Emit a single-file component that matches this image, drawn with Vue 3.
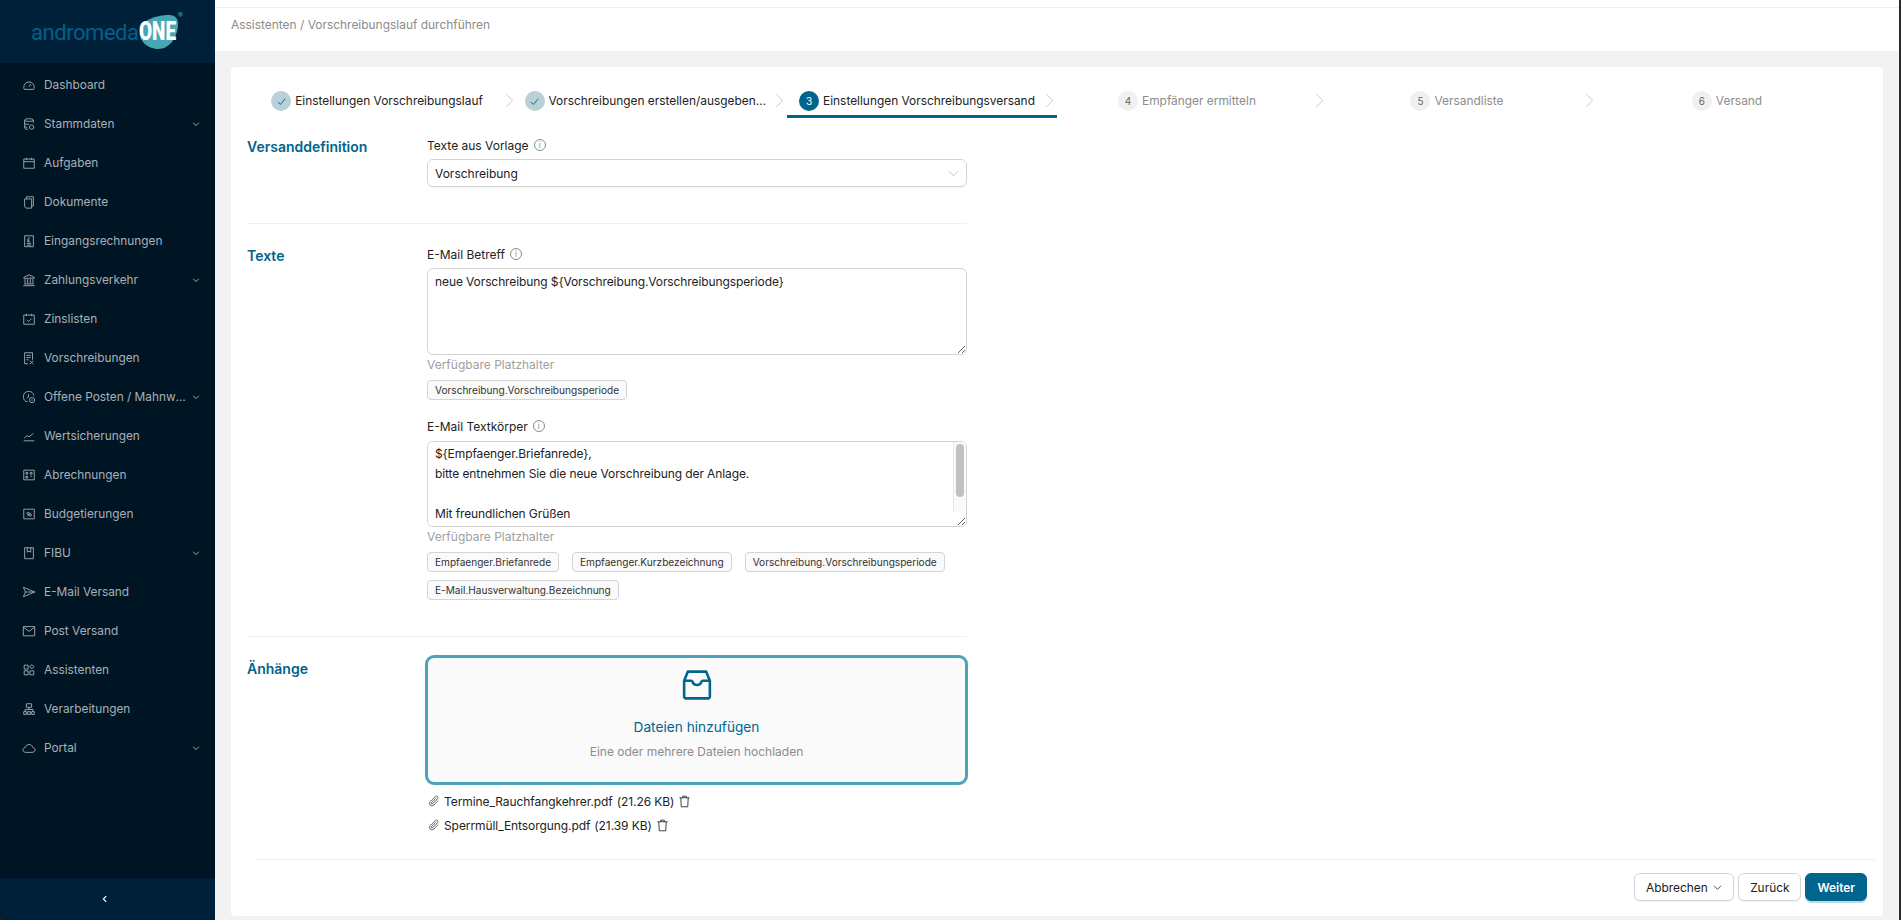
<script setup>
import { ref } from 'vue'

const menu = [
  { label: 'Dashboard', icon: 'gauge' },
  { label: 'Stammdaten', icon: 'db', sub: true },
  { label: 'Aufgaben', icon: 'calendar' },
  { label: 'Dokumente', icon: 'copy' },
  { label: 'Eingangsrechnungen', icon: 'invoice' },
  { label: 'Zahlungsverkehr', icon: 'bank', sub: true },
  { label: 'Zinslisten', icon: 'calcheck' },
  { label: 'Vorschreibungen', icon: 'receipt' },
  { label: 'Offene Posten / Mahnwesen', icon: 'clockgear', sub: true },
  { label: 'Wertsicherungen', icon: 'chart' },
  { label: 'Abrechnungen', icon: 'scan' },
  { label: 'Budgetierungen', icon: 'budget' },
  { label: 'FIBU', icon: 'book', sub: true },
  { label: 'E-Mail Versand', icon: 'send' },
  { label: 'Post Versand', icon: 'mail' },
  { label: 'Assistenten', icon: 'apps' },
  { label: 'Verarbeitungen', icon: 'tree' },
  { label: 'Portal', icon: 'cloud', sub: true }
]

const icons = {
  gauge: 'M2 10.500a6 6 0 1 1 12 0c0 1-.3 1.800-.7 2.500H2.700C2.300 12.300 2 11.500 2 10.500zM8 10l2-3M4.500 9h.5M11 9h.5M8 6v.5',
  db: 'M3 3.500C3 2.500 5 2 8 2s5 .5 5 1.500v3M3 3.500c0 1 2 1.500 5 1.500s5-.5 5-1.500M3 3.500v9C3 13.500 4.500 14 7 14M3 7c0 1 2 1.500 5 1.500M3 10.500c0 .8 1.200 1.300 3 1.400M11 9a2.500 2.500 0 1 0 0 5 2.500 2.500 0 0 0 0-5z',
  calendar: 'M2 3.500h12v10.500H2zM2 6.500h12M5 2v2.500M11 2v2.500',
  copy: 'M5 2h8v10.500h-2M3 4.500h8V15H4.500L3 13.500zM5 2v2.500',
  invoice: 'M3 2h10v12.500H3zM5.500 11h5M5.500 12.800h5M9.500 4.500c-1.500-.5-2.500.3-2.500 1.500v3M6 7h2.500M6 9h3.500',
  bank: 'M8 2l6 3v1H2V5zM3.500 7v5M6.500 7v5M9.500 7v5M12.500 7v5M2.500 12.500h11M1.500 14.500h13',
  calcheck: 'M2 3.500h12v10.500H2zM5 2v2.500M11 2v2.500M5.500 9l2 2 3.500-3.500',
  receipt: 'M3 2h9v8M3 2v12.500h4M5 5h5M5 7.500h5M5 10h2.500M9 11l4 4M13 11l-4 4',
  clockgear: 'M13.500 6.500A6 6 0 1 0 6.500 13.500M7.500 4.500V8l-2 1.500M11.500 8.500a3 3 0 1 0 0 6 3 3 0 0 0 0-6zM11.500 10.500v2',
  chart: 'M2 13.500h12M2.500 10.500l3.500-3 2 1.500 5-4',
  scan: 'M2 2.500h12v11H2zM4.500 5h2v2h-2zM9.500 5h2v2h-2zM4.500 9.500h2v2h-2zM9.500 9.500h2',
  budget: 'M2 2.500h12v11H2zM6 10.500l4-4M7 6a1.300 1.300 0 1 0 0 2.600A1.300 1.300 0 0 0 7 6zM9.500 8a1.300 1.300 0 1 0 0 2.600 1.300 1.300 0 0 0 0-2.600z',
  book: 'M3 2h10v12.500H3zM6 2v5l2-1 2 1V2',
  send: 'M1.500 2.500l13 5.500-13 5.500L4 8zM4 8h10.500',
  mail: 'M1.500 3h13v10.500h-13zM1.500 3.500L8 8.500l6.500-5',
  apps: 'M2.500 2.500h4.500v4.500H2.500zM2.500 9h4.500v4.500H2.500zM9 9h4.500v4.500H9zM11.200 1.800l2.500 2.500-2.500 2.500-2.500-2.500z',
  tree: 'M5 2h6v4H5zM8 6v2.500M3.500 11V8.500h9V11M2 11h3v3.200H2zM6.500 11h3v3.200h-3zM11 11h3v3.200h-3z',
  cloud: 'M4.500 13C2.500 13 1 11.800 1 10.200 1 8.800 2.200 7.700 3.700 7.500 4.300 5.300 6 4 8 4c2.200 0 3.900 1.400 4.400 3.500 1.500.2 2.600 1.300 2.600 2.700 0 1.600-1.500 2.800-3.500 2.800z'
}

const steps = [
  { label: 'Einstellungen Vorschreibungslauf', state: 'done' },
  { label: 'Vorschreibungen erstellen/ausgeben/versenden', state: 'done' },
  { label: 'Einstellungen Vorschreibungsversand', state: 'active', num: 3 },
  { label: 'Empfänger ermitteln', state: 'todo', num: 4 },
  { label: 'Versandliste', state: 'todo', num: 5 },
  { label: 'Versand', state: 'todo', num: 6 }
]

const subject = ref('neue Vorschreibung ${Vorschreibung.Vorschreibungsperiode}')
const body = ref('${Empfaenger.Briefanrede},\nbitte entnehmen Sie die neue Vorschreibung der Anlage.\n\nMit freundlichen Grüßen\n${E-Mail.Hausverwaltung.Bezeichnung}\n\n\n')

const subjectTags = ['Vorschreibung.Vorschreibungsperiode']
const bodyTags = [
  'Empfaenger.Briefanrede',
  'Empfaenger.Kurzbezeichnung',
  'Vorschreibung.Vorschreibungsperiode',
  'E-Mail.Hausverwaltung.Bezeichnung'
]
const files = [
  { name: 'Termine_Rauchfangkehrer.pdf', size: '(21.26 KB)' },
  { name: 'Sperrmüll_Entsorgung.pdf', size: '(21.39 KB)' }
]
</script>

<template>
  <div class="layout">
    <aside class="sidebar">
      <div class="logo">
        <span class="logo-word">andromeda.</span>
        <span class="logo-one">
          <svg viewBox="0 0 40 36" width="43" height="36" preserveAspectRatio="none"><path d="M3 15C5 6 18 1 30 1c6 0 9 4 8 12-1 11-8 22-18 22C9 35 1 26 3 15z" fill="#46a6b4" /></svg>
          <b>ONE</b>
        </span>
        <span class="logo-reg">®</span>
      </div>
      <nav class="menu">
        <a v-for="item in menu" :key="item.label" class="menu-item">
          <svg class="menu-icon" viewBox="0 0 16 16" width="14" height="14"><path :d="icons[item.icon]" /></svg>
          <span class="menu-label">{{ item.label }}</span>
          <svg v-if="item.sub" class="menu-caret" viewBox="0 0 10 10" width="8" height="8"><path d="M1.500 3.500L5 7l3.500-3.500" /></svg>
        </a>
      </nav>
      <div class="collapse">
        <svg viewBox="0 0 10 10" width="8" height="8"><path d="M6.500 1.500L3 5l3.500 3.500" /></svg>
      </div>
    </aside>

    <main class="main">
      <header class="topbar">
        <span>Assistenten / Vorschreibungslauf durchführen</span>
      </header>

      <section class="card">
        <div class="steps">
          <div v-for="(step, i) in steps" :key="step.label" class="step" :class="step.state">
            <span class="step-dot">
              <svg v-if="step.state === 'done'" viewBox="0 0 12 12" width="11" height="11"><path d="M2 6.500L4.800 9.300 10 3" /></svg>
              <template v-else>{{ step.num }}</template>
            </span>
            <span class="step-label">{{ step.label }}</span>
            <svg v-if="i < steps.length - 1" class="step-arrow" viewBox="0 0 10 16" width="9" height="15"><path d="M1.500 1L8.500 8l-7 7" /></svg>
          </div>
        </div>

        <div class="form">
          <div class="section section-first">
            <h3>Versanddefinition</h3>
            <div class="fields">
              <label class="field-label">Texte aus Vorlage <i class="info">i</i></label>
              <div class="select">
                <span>Vorschreibung</span>
                <svg viewBox="0 0 12 12" width="11" height="11"><path d="M1 3.500L6 8.500l5-5" /></svg>
              </div>
            </div>
          </div>

          <div class="section section-texts">
            <h3>Texte</h3>
            <div class="fields">
              <label class="field-label">E-Mail Betreff <i class="info">i</i></label>
              <textarea v-model="subject" class="input input-subject" readonly></textarea>
              <div class="hint">Verfügbare Platzhalter</div>
              <div class="tags">
                <span v-for="tag in subjectTags" :key="tag" class="tag">{{ tag }}</span>
              </div>

              <label class="field-label field-label-second">E-Mail Textkörper <i class="info">i</i></label>
              <div class="input-wrap">
                <textarea v-model="body" class="input input-body" readonly></textarea>
                <div class="scrollbar"><div class="scrollbar-thumb"></div></div>
              </div>
              <div class="hint">Verfügbare Platzhalter</div>
              <div class="tags">
                <span v-for="tag in bodyTags" :key="tag" class="tag">{{ tag }}</span>
              </div>
            </div>
          </div>

          <div class="section section-files">
            <h3>Änhänge</h3>
            <div class="fields">
              <div class="upload">
                <svg viewBox="0 0 28 28" width="30" height="30"><path d="M5.500 1.500h17L26 10v15a1.500 1.500 0 0 1-1.500 1.500h-21A1.500 1.500 0 0 1 2 25V10zM2 10h6.500c1 0 1.200.5 1.500 1.300.5 1.700 2 2.700 4 2.700s3.500-1 4-2.700c.3-.8.5-1.300 1.500-1.300H26" /></svg>
                <div class="upload-title">Dateien hinzufügen</div>
                <div class="upload-sub">Eine oder mehrere Dateien hochladen</div>
              </div>
              <div class="files">
                <div v-for="f in files" :key="f.name" class="file">
                  <svg class="clip" viewBox="0 0 16 16" width="12" height="12"><path d="M13.500 7.500l-6 6a3.200 3.200 0 0 1-4.600-4.600l6.800-6.800a2.100 2.100 0 0 1 3 3L6 11.800a1 1 0 0 1-1.500-1.500l6-6" /></svg>
                  <span>{{ f.name }}</span>
                  <span>{{ f.size }}</span>
                  <svg class="trash" viewBox="0 0 14 14" width="13" height="13"><path d="M1.500 3h11M5 3V1.300h4V3M3 3l.5 9.700h7L11 3" /></svg>
                </div>
              </div>
            </div>
          </div>
        </div>

        <footer class="actions">
          <button class="btn">Abbrechen <svg viewBox="0 0 10 10" width="9" height="9"><path d="M1 3l4 4 4-4" /></svg></button>
          <button class="btn">Zurück</button>
          <button class="btn primary">Weiter</button>
        </footer>
      </section>
    </main>
    <div class="edge"></div>
  </div>
</template>

<style>
html, body {
  margin: 0;
  background: #f2f2f2;
}
</style>

<style scoped>
* {
  box-sizing: border-box;
}
.layout {
  display: flex;
  width: 1901px;
  height: 920px;
  overflow: hidden;
  background: #1c1c1c;
  font-family: Inter, "Noto Sans", sans-serif;
  font-size: 12px;
  color: #222;
}
.sidebar {
  width: 215px;
  flex: none;
  display: flex;
  flex-direction: column;
  background: #001524;
  border-bottom-left-radius: 8px;
  overflow: hidden;
}
.logo {
  height: 63px;
  flex: none;
  display: flex;
  align-items: center;
  padding-left: 31px;
  background: #00203a;
  position: relative;
}
.logo-word {
  font-family: Roboto, sans-serif;
  font-weight: 400;
  font-size: 22px;
  letter-spacing: -0.45px;
  color: #00608a;
  display: inline-block;
  width: 106px;
  margin-top: 1px;
  white-space: nowrap;
}
.logo-one {
  position: relative;
  width: 43px;
  height: 36px;
}
.logo-one svg {
  display: block;
}
.logo-one b {
  position: absolute;
  left: 2px;
  top: 6px;
  font-family: Roboto, sans-serif;
  font-weight: 900;
  font-size: 25px;
  color: #fff;
  transform: scaleX(0.76);
  transform-origin: left center;
  line-height: 24px;
}
.logo-reg {
  position: absolute;
  left: 178px;
  top: 11px;
  font-size: 7px;
  color: #46a6b4;
}
.menu {
  flex: 1;
  padding-top: 2px;
}
.menu-item {
  display: flex;
  align-items: center;
  height: 39px;
  padding: 0 15px 0 22px;
  color: #a9b0b6;
  font-size: 11.850px;
}
.menu-icon {
  flex: none;
  margin-right: 8px;
  fill: none;
  stroke: #a9b0b6;
  stroke-width: 1;
}
.menu-label {
  flex: 1;
  min-width: 0;
  white-space: nowrap;
  overflow: hidden;
  text-overflow: ellipsis;
}
.menu-caret {
  flex: none;
  margin-left: 4px;
  fill: none;
  stroke: #a9b0b6;
  stroke-width: 1.200;
}
.collapse {
  height: 42px;
  flex: none;
  display: flex;
  align-items: center;
  justify-content: center;
  padding-right: 5px;
  background: #00203a;
}
.collapse svg {
  fill: none;
  stroke: #fff;
  stroke-width: 1.500;
}
.main {
  flex: 1;
  min-width: 0;
  display: flex;
  flex-direction: column;
  background: #f2f2f2;
}
.topbar {
  height: 51px;
  flex: none;
  padding: 17px 16px 0;
  background: #fff;
  box-shadow: inset 0 7px 0 #fff, inset 0 8px 0 #f0f0f0;
  color: #8c8c8c;
  font-size: 11.950px;
  line-height: 16px;
}
.card {
  margin: 16px 16px 4px;
  height: 849px;
  padding: 16px 16px 0;
  background: #fff;
  border-radius: 4px;
  display: flex;
  flex-direction: column;
}
.steps {
  display: grid;
  grid-template-columns: repeat(6, 270px);
  height: 35px;
  flex: none;
}
.step {
  position: relative;
  display: flex;
  justify-content: center;
  align-items: flex-start;
  padding: 8px 10px 0 0;
  color: #8c8c8c;
  font-size: 11.900px;
  line-height: 20px;
  min-width: 0;
}
.step.active {
  color: #222;
  border-bottom: 3px solid #00658c;
}
.step.done {
  color: #222;
}
.step-dot {
  flex: none;
  width: 20px;
  height: 20px;
  margin-right: 4px;
  border-radius: 50%;
  background: #f0f0f0;
  color: #666;
  display: flex;
  align-items: center;
  justify-content: center;
  font-size: 10px;
}
.step.done .step-dot {
  background: #b8d0d6;
}
.step.done .step-dot svg {
  fill: none;
  stroke: #00658c;
  stroke-width: 1;
}
.step.active .step-dot {
  background: #00658c;
  color: #fff;
}
.step-label {
  white-space: nowrap;
  overflow: hidden;
  text-overflow: ellipsis;
  max-width: 221px;
}
.step-arrow {
  position: absolute;
  right: 3px;
  top: 10px;
  fill: none;
  stroke: #c4c4c4;
  stroke-width: 1;
}
.form {
  flex: 1;
  min-height: 0;
  width: 720px;
}
.section {
  display: grid;
  grid-template-columns: 180px 540px;
  border-bottom: 1px solid #f0f0f0;
}
.section h3 {
  margin: 0;
  padding-top: 2px;
  font-size: 14px;
  line-height: 20px;
  font-weight: 600;
  color: #00658c;
}
.section-first {
  padding-top: 17px;
  height: 106px;
}
.section-texts {
  padding-top: 20px;
  height: 413px;
}
.section-files {
  padding-top: 18px;
  border-bottom: 0;
}
.section-files h3 {
  padding-top: 4px;
}
.fields {
  min-width: 0;
}
.field-label {
  display: flex;
  align-items: center;
  height: 20px;
  color: #222;
  font-size: 12px;
}
.field-label-second {
  margin-top: 16px;
}
.info {
  display: inline-flex;
  align-items: center;
  justify-content: center;
  width: 12px;
  height: 12px;
  margin-left: 5px;
  border: 1px solid #8c8c8c;
  border-radius: 50%;
  color: #8c8c8c;
  font-size: 8px;
  font-style: normal;
  line-height: 1;
}
.select {
  display: flex;
  align-items: center;
  justify-content: space-between;
  height: 28px;
  margin-top: 4px;
  padding: 0 7px;
  border: 1px solid #d4d4d4;
  border-radius: 6px;
  box-shadow: 0 1px 1px rgba(0, 0, 0, 0.05);
}
.select svg {
  fill: none;
  stroke: #bfbfbf;
  stroke-width: 1;
}
.input {
  display: block;
  width: 100%;
  height: 87px;
  margin: 0;
  padding: 3px 7px;
  border: 1px solid #d4d4d4;
  border-radius: 6px;
  background: #fff;
  font-family: inherit;
  font-size: 12px;
  letter-spacing: -0.1px;
  line-height: 20px;
  color: #222;
  outline: none;
  resize: vertical;
}
.input-subject {
  margin-top: 4px;
}
.input-wrap {
  position: relative;
  margin-top: 5px;
}
.input-body {
  height: 86px;
  padding-top: 2px;
}
.scrollbar {
  position: absolute;
  top: 1px;
  right: 1px;
  bottom: 15px;
  width: 13px;
  background: #fafafa;
  border-left: 1px solid #e8e8e8;
  border-top-right-radius: 5px;
}
.scrollbar-thumb {
  width: 8px;
  height: 53px;
  margin: 2px 0 0 2px;
  background: #c1c1c1;
  border-radius: 4px;
}
.hint {
  height: 20px;
  line-height: 20px;
  color: #a0a0a0;
  font-size: 12px;
}
.tags {
  display: flex;
  flex-wrap: wrap;
  gap: 8px 13px;
  margin-top: 5px;
}
.tag {
  display: inline-flex;
  align-items: center;
  height: 20px;
  padding: 0 7px;
  border: 1px solid #d4d4d4;
  border-radius: 4px;
  background: #fafafa;
  font-size: 10.100px;
  color: #333;
  white-space: nowrap;
}
.upload {
  width: 543px;
  height: 130px;
  margin-left: -2px;
  border: 3px solid #4ea3b8;
  border-radius: 9px;
  background: #fafafa;
  display: flex;
  flex-direction: column;
  align-items: center;
  padding-top: 12px;
}
.upload svg {
  fill: none;
  stroke: #00658c;
  stroke-width: 2.400;
  stroke-linejoin: round;
}
.upload-title {
  margin-top: 17px;
  font-size: 13.700px;
  line-height: 20px;
  color: #00658c;
}
.upload-sub {
  margin-top: 5px;
  font-size: 12px;
  line-height: 20px;
  color: #8c8c8c;
}
.files {
  margin-top: 4px;
}
.file {
  display: flex;
  align-items: center;
  gap: 4px;
  height: 24px;
  font-size: 12px;
  letter-spacing: -0.08px;
  padding-left: 1px;
}
.clip {
  fill: none;
  stroke: #333;
  stroke-width: 1;
}
.trash {
  fill: none;
  stroke: #333;
  stroke-width: 1;
}
.actions {
  flex: none;
  display: flex;
  justify-content: flex-end;
  gap: 4px;
  height: 57px;
  margin: 0 -8px 0 8px;
  padding-top: 13px;
  padding-right: 8px;
  border-top: 1px solid #f0f0f0;
}
.btn {
  height: 28px;
  padding: 0 11px;
  border: 1px solid #d4d4d4;
  border-radius: 6px;
  background: #fff;
  font-family: inherit;
  font-size: 11.900px;
  color: #222;
  box-shadow: 0 1px 1px rgba(0, 0, 0, 0.06);
}
.btn svg {
  margin-left: 2px;
  fill: none;
  stroke: #444;
  stroke-width: 1;
}
.btn.primary {
  border-color: #00658c;
  background: #00658c;
  color: #fff;
  font-weight: 600;
  box-shadow: 0 2px 0 rgba(0, 101, 140, 0.25);
}
.edge {
  width: 2px;
  flex: none;
  background: #2a2a2a;
}
</style>
